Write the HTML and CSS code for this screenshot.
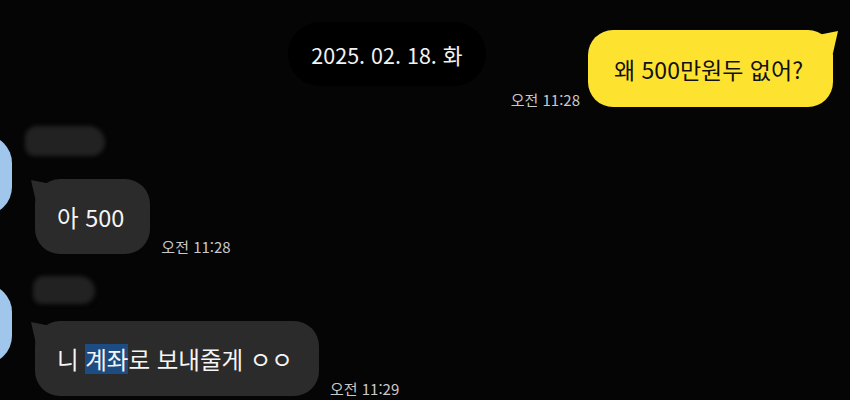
FILE: index.html
```html
<!DOCTYPE html>
<html lang="ko">
<head>
    <meta charset="UTF-8">
    <title>채팅</title>
    <link rel="stylesheet" href="styles.css">
</head>
<body>
    <div class="chat">
        <div class="top">
            <div class="date-pill">2025. 02. 18. 화</div>
            <div class="mine">
                <span class="time">오전 11:28</span>
                <div class="bubble yellow">왜 500만원두 없어?</div>
            </div>
        </div>

        <div class="msg first">
            <div class="avatar"></div>
            <div class="body">
                <div class="name"><span class="blob"></span></div>
                <div class="line">
                    <div class="bubble gray">아 500</div>
                    <span class="time">오전 11:28</span>
                </div>
            </div>
        </div>

        <div class="msg second">
            <div class="avatar"></div>
            <div class="body">
                <div class="name"><span class="blob"></span></div>
                <div class="line">
                    <div class="bubble gray">니&nbsp;<span class="sel">계좌</span>로 보내줄게 ㅇㅇ</div>
                    <span class="time">오전 11:29</span>
                </div>
            </div>
        </div>
    </div>
</body>
</html>
```

FILE: styles.css
```css
* {
    margin: 0;
    padding: 0;
    box-sizing: border-box;
}
body {
    width: 850px;
    height: 400px;
    overflow: hidden;
    background: #050505;
    font-family: "Noto Sans CJK KR", "Noto Sans", sans-serif;
    color: #fff;
}
.chat {
    padding-top: 22px;
}

/* 상단 */
.top {
    display: flex;
    align-items: flex-start;
    padding: 0 17px 0 288px;
}
.date-pill {
    width: 198px;
    height: 64px;
    border-radius: 32px;
    background: #000;
    font-size: 21.5px;
    display: flex;
    align-items: center;
    justify-content: center;
    color: #f2f2f2;
}
.mine {
    margin-left: auto;
    margin-top: 8px;
    display: flex;
    align-items: flex-end;
    gap: 8px;
}
.time {
    font-size: 15px;
    line-height: 14px;
    color: #c9c9c9;
    white-space: nowrap;
}

/* 말풍선 */
.bubble {
    position: relative;
    height: 77px;
    border-radius: 25px;
    font-size: 23px;
    display: flex;
    align-items: center;
    white-space: nowrap;
}
.yellow {
    width: 245px;
    padding: 0 26px;
    background: #fde330;
    color: #111;
}
.yellow::before {
    content: "";
    position: absolute;
    right: -5px;
    top: 1px;
    width: 20px;
    height: 22px;
    background: #fde330;
    clip-path: polygon(100% 0, 0 18%, 0 100%, 75% 100%);
}
.gray {
    padding: 0 26px 0 22px;
    background: #2b2b2b;
    color: #f5f5f5;
    font-size: 23.5px;
}
.gray::before {
    content: "";
    position: absolute;
    left: -4px;
    top: 1px;
    width: 20px;
    height: 22px;
    background: #2b2b2b;
    clip-path: polygon(0 0, 100% 18%, 100% 100%, 25% 100%);
}
.sel {
    display: inline-block;
    line-height: 30px;
    background: #1c4c82;
}

/* 받은 메시지 */
.msg {
    display: flex;
    align-items: flex-start;
}
.first {
    margin-top: 15px;
}
.second {
    margin-top: 20px;
}
.avatar {
    width: 80px;
    height: 80px;
    margin-left: -68px;
    border-radius: 28px;
    background: #a0c6eb;
    flex-shrink: 0;
}
.first .avatar {
    margin-top: 13px;
}
.second .avatar {
    margin-top: 10px;
}
.body {
    margin-left: 23px;
}
.name {
    height: 38px;
    margin-left: -10px;
}
.second .name {
    height: 33px;
    margin-left: -2px;
}
.blob {
    display: block;
    width: 80px;
    height: 30px;
    margin-top: 4px;
    border-radius: 16px 22px 18px 12px;
    background: #222;
    filter: blur(2px);
}
.second .blob {
    width: 62px;
    height: 28px;
    margin-top: 2px;
}
.line {
    display: flex;
    align-items: flex-end;
    gap: 11px;
    margin-top: 15px;
}
.second .line {
    margin-top: 12px;
}
.line .bubble {
    height: 75px;
}
```
